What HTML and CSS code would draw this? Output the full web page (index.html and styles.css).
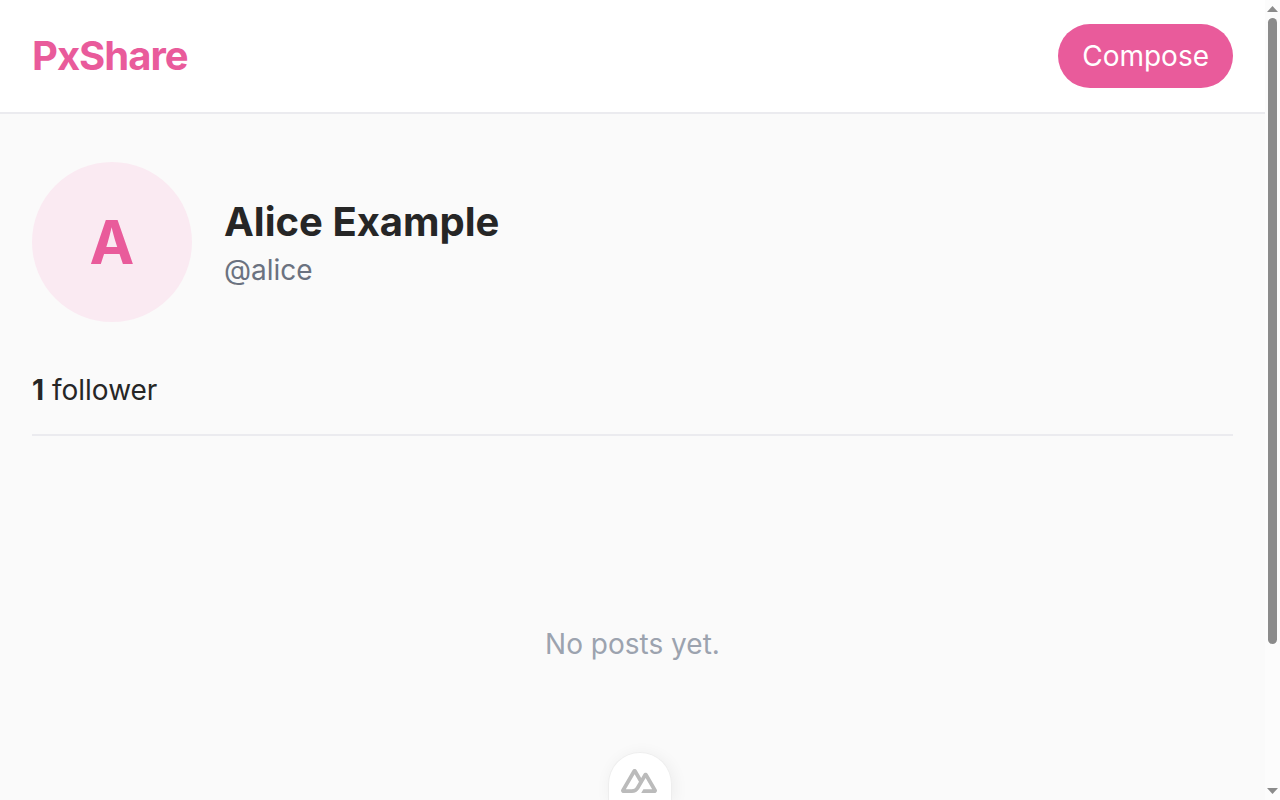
FILE: index.html
```html
<!DOCTYPE html>
<html lang="en">
<head>
  <meta charset="utf-8">
  <meta name="viewport" content="width=device-width, initial-scale=1">
  <title>PxShare</title>
  <link rel="stylesheet" href="styles.css">
</head>
<body>
  <div class="page">
    <header class="topbar">
      <a class="brand" href="#">PxShare</a>
      <button class="compose" type="button">Compose</button>
    </header>
    <main class="profile">
      <section class="identity">
        <div class="avatar">A</div>
        <div>
          <h1 class="name">Alice Example</h1>
          <p class="handle">@alice</p>
        </div>
      </section>
      <p class="stats"><strong>1</strong> follower</p>
      <p class="empty">No posts yet.</p>
    </main>
  </div>
  <div class="scrollbar" aria-hidden="true">
    <svg class="arrow" viewBox="0 0 11 6"><path d="M5.5 0L11 6H0z"/></svg>
    <div class="track"><div class="thumb"></div></div>
    <svg class="arrow" viewBox="0 0 11 6"><path d="M0 0H11L5.5 6z"/></svg>
  </div>
  <button class="devtools" type="button" aria-label="Toggle Nuxt DevTools">
    <svg class="devtools-icon" viewBox="0 54 324 216"><path d="M181.767 270H302.211C306.037 270 309.795 269.003 313.108 267.107C316.421 265.211 319.172 262.484 321.084 259.2C322.996 255.915 324.002 252.19 324 248.399C323.998 244.607 322.989 240.883 321.074 237.601L240.187 98.744C238.275 95.461 235.525 92.734 232.213 90.839C228.901 88.943 225.143 87.945 221.318 87.945C217.494 87.945 213.736 88.943 210.424 90.839C207.112 92.734 204.361 95.461 202.449 98.744L181.767 134.272L141.329 64.798C139.416 61.515 136.664 58.788 133.351 56.893C130.038 54.998 126.28 54 122.454 54C118.629 54 114.871 54.998 111.558 56.893C108.245 58.788 105.493 61.515 103.58 64.798L2.926 237.601C1.011 240.883 0 244.607 0 248.399C0 252.19 1.004 255.915 2.916 259.2C4.828 262.484 7.579 265.211 10.892 267.107C14.205 269.003 17.963 270 21.789 270H97.394C127.349 270 149.44 256.959 164.641 231.517L201.546 168.172L221.313 134.272L280.637 236.1H201.546L181.767 270ZM96.161 236.065L43.398 236.054L122.49 100.291L161.953 168.172L135.531 213.543C125.436 230.051 113.968 236.065 96.161 236.065Z"/></svg>
  </button>
</body>
</html>
```

FILE: styles.css
```css
* {
  box-sizing: border-box;
}

body {
  display: flex;
  height: 100vh;
  margin: 0;
  overflow: hidden;
  background: #fafafa;
  color: #262626;
  font: 28px/40px Inter, "Liberation Sans", sans-serif;
}

h1,
p {
  margin: 0;
}

.page {
  flex: 1;
  min-width: 0;
}

.topbar {
  display: flex;
  align-items: center;
  justify-content: space-between;
  padding: 24px 32px;
  background: #fff;
  border-bottom: 2px solid #ebebef;
}

.brand {
  color: #e95b9b;
  font-size: 40px;
  font-weight: 700;
  line-height: 56px;
  letter-spacing: -1px;
  text-decoration: none;
}

.compose {
  padding: 12px 24px;
  border: 0;
  border-radius: 32px;
  background: #e95b9b;
  color: #fff;
  font: inherit;
}

.profile {
  padding: 48px 32px 0;
}

.identity {
  display: flex;
  align-items: center;
  gap: 32px;
}

.avatar {
  display: flex;
  align-items: center;
  justify-content: center;
  width: 160px;
  height: 160px;
  border-radius: 50%;
  background: #faeaf2;
  color: #e95b9b;
  font-size: 60px;
  font-weight: 700;
}

.name {
  font-size: 40px;
  font-weight: 700;
  line-height: 56px;
}

.handle {
  color: #6b7280;
}

.stats {
  margin-top: 48px;
  padding-bottom: 24px;
  border-bottom: 2px solid #ebebef;
}

.empty {
  padding-top: 188px;
  color: #9ca3af;
  text-align: center;
}

.scrollbar {
  display: flex;
  flex-direction: column;
  align-items: center;
  width: 15px;
  padding: 6px 0;
  background: #fcfcfc;
}

.arrow {
  width: 11px;
  height: 6px;
  fill: #8b8b8b;
}

.track {
  flex: 1;
  padding: 6px 0;
}

.thumb {
  width: 9px;
  height: 82%;
  border-radius: 5px;
  background: #8b8b8b;
}

.devtools {
  position: fixed;
  bottom: 0;
  left: 50%;
  display: flex;
  justify-content: center;
  width: 64px;
  height: 48px;
  margin-left: -32px;
  padding: 16px 2px 0 0;
  border: 1px solid #eee;
  border-bottom: 0;
  border-radius: 32px 32px 0 0;
  background: #fff;
  box-shadow: 2px 2px 16px rgba(0, 0, 0, 0.06);
}

.devtools-icon {
  width: 36px;
  height: 24px;
  fill: #bbb;
}
```
